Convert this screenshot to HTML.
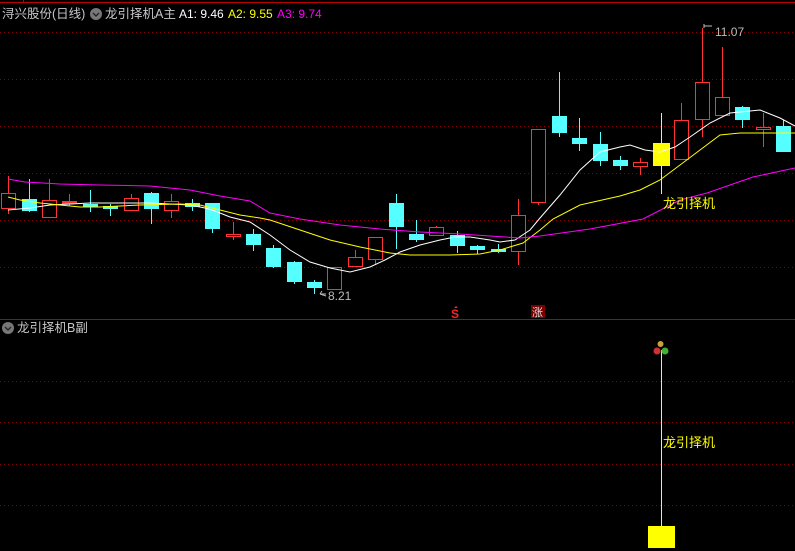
<!DOCTYPE html>
<html><head><meta charset="utf-8"><style>
html,body{margin:0;padding:0;background:#000;width:795px;height:551px;overflow:hidden}
svg{display:block}
text{font-family:"Liberation Sans","Noto Sans CJK SC",sans-serif}
</style></head><body>
<svg width="795" height="551" viewBox="0 0 795 551" xmlns="http://www.w3.org/2000/svg">
<rect width="795" height="551" fill="#000"/>
<line x1="0" y1="2.5" x2="795" y2="2.5" stroke="#b00" stroke-width="1"/>
<line x1="23.5" y1="0" x2="23.5" y2="3" stroke="#b00"/>
<g stroke="#8a0000" stroke-width="1" stroke-dasharray="1,3">
<line x1="0" y1="32.5" x2="795" y2="32.5"/><line x1="0" y1="79.5" x2="795" y2="79.5"/>
<line x1="0" y1="126.5" x2="795" y2="126.5"/><line x1="0" y1="173.5" x2="795" y2="173.5"/>
<line x1="0" y1="220.5" x2="795" y2="220.5"/><line x1="0" y1="267.5" x2="795" y2="267.5"/>
<line x1="0" y1="381.5" x2="795" y2="381.5"/><line x1="0" y1="422.5" x2="795" y2="422.5"/>
<line x1="0" y1="464.5" x2="795" y2="464.5"/><line x1="0" y1="505.5" x2="795" y2="505.5"/>
</g>
<line x1="0" y1="319.5" x2="795" y2="319.5" stroke="#b00" stroke-width="1"/>

<!-- header -->
<text x="2" y="18" font-size="12.5" fill="#c8c8c8">浔兴股份(日线)</text>
<circle cx="96" cy="14" r="6" fill="#777"/><path d="M93 13 l3 3 l3 -3" stroke="#222" fill="none" stroke-width="1.3"/>
<text x="105" y="18" font-size="12.5" fill="#c8c8c8">龙引择机A主</text>
<text x="179" y="18" font-size="12" fill="#fff">A1: 9.46</text>
<text x="228" y="18" font-size="12" fill="#ff0">A2: 9.55</text>
<text x="277" y="18" font-size="12" fill="#f0f">A3: 9.74</text>

<circle cx="8" cy="328" r="6" fill="#777"/><path d="M5 327 l3 3 l3 -3" stroke="#222" fill="none" stroke-width="1.3"/>
<text x="17" y="332" font-size="12.5" fill="#c8c8c8">龙引择机B副</text>

<!-- wicks -->
<g stroke-width="1">
<g stroke="#ff3333">
<line x1="8.5" y1="176" x2="8.5" y2="214"/><line x1="49.5" y1="179" x2="49.5" y2="218"/>
<line x1="69.5" y1="194" x2="69.5" y2="206"/><line x1="131.5" y1="194" x2="131.5" y2="211"/>
<line x1="171.5" y1="194" x2="171.5" y2="218"/><line x1="233.5" y1="222" x2="233.5" y2="240"/>
<line x1="334.5" y1="267" x2="334.5" y2="290"/><line x1="355.5" y1="250" x2="355.5" y2="267"/>
<line x1="375.5" y1="237" x2="375.5" y2="265"/><line x1="436.5" y1="226" x2="436.5" y2="236"/>
<line x1="518.5" y1="199" x2="518.5" y2="265"/><line x1="538.5" y1="129" x2="538.5" y2="205"/>
<line x1="640.5" y1="158" x2="640.5" y2="175"/><line x1="681.5" y1="103" x2="681.5" y2="160"/>
<line x1="702.5" y1="28" x2="702.5" y2="137"/><line x1="722.5" y1="47" x2="722.5" y2="117"/>
<line x1="763.5" y1="113" x2="763.5" y2="147"/>
</g>
<g stroke="#55ffff">
<line x1="29.5" y1="179" x2="29.5" y2="212"/><line x1="90.5" y1="190" x2="90.5" y2="212"/>
<line x1="110.5" y1="204" x2="110.5" y2="216"/><line x1="151.5" y1="192" x2="151.5" y2="224"/>
<line x1="192.5" y1="199" x2="192.5" y2="211"/><line x1="212.5" y1="203" x2="212.5" y2="233"/>
<line x1="253.5" y1="229" x2="253.5" y2="251"/><line x1="273.5" y1="245" x2="273.5" y2="268"/>
<line x1="294.5" y1="261" x2="294.5" y2="284"/><line x1="314.5" y1="280" x2="314.5" y2="294"/>
<line x1="396.5" y1="194" x2="396.5" y2="249"/><line x1="416.5" y1="220" x2="416.5" y2="242"/>
<line x1="457.5" y1="231" x2="457.5" y2="253"/><line x1="477.5" y1="245" x2="477.5" y2="254"/>
<line x1="498.5" y1="244" x2="498.5" y2="253"/><line x1="559.5" y1="72" x2="559.5" y2="137"/>
<line x1="579.5" y1="118" x2="579.5" y2="151"/><line x1="600.5" y1="132" x2="600.5" y2="166"/>
<line x1="620.5" y1="156" x2="620.5" y2="170"/><line x1="742.5" y1="106" x2="742.5" y2="128"/>
<line x1="783.5" y1="120" x2="783.5" y2="152"/>
</g>
<line x1="661.5" y1="113" x2="661.5" y2="194" stroke="#ff0"/>
</g>
<!-- red hollow bodies -->
<g fill="#000" stroke="#ff3333" stroke-width="1">
<rect x="1.5" y="193.5" width="14" height="15"/><rect x="42.5" y="200.5" width="14" height="17"/>
<rect x="62.5" y="201.5" width="14" height="2" fill="#ff3333"/><rect x="124.5" y="198.5" width="14" height="12"/>
<rect x="164.5" y="201.5" width="14" height="9"/><rect x="226.5" y="234.5" width="14" height="2"/>
<rect x="327.5" y="267.5" width="14" height="22"/><rect x="348.5" y="257.5" width="14" height="9"/>
<rect x="368.5" y="237.5" width="14" height="22"/><rect x="429.5" y="227.5" width="14" height="8"/>
<rect x="511.5" y="215.5" width="14" height="36"/><rect x="531.5" y="129.5" width="14" height="73"/>
<rect x="633.5" y="162.5" width="14" height="4"/><rect x="674.5" y="120.5" width="14" height="39"/>
<rect x="695.5" y="82.5" width="14" height="37"/><rect x="715.5" y="97.5" width="14" height="18"/>
<rect x="756.5" y="127.5" width="14" height="2"/>
</g>
<!-- cyan bodies -->
<g fill="#55ffff">
<rect x="22" y="199" width="15" height="12"/><rect x="83" y="204" width="15" height="3"/>
<rect x="103" y="206" width="15" height="3"/><rect x="144" y="193" width="15" height="16"/>
<rect x="185" y="203" width="15" height="4"/><rect x="205" y="203" width="15" height="26"/>
<rect x="246" y="234" width="15" height="11"/><rect x="266" y="248" width="15" height="19"/>
<rect x="287" y="262" width="15" height="20"/><rect x="307" y="282" width="15" height="6"/>
<rect x="389" y="203" width="15" height="24"/><rect x="409" y="234" width="15" height="6"/>
<rect x="450" y="235" width="15" height="11"/><rect x="470" y="246" width="15" height="4"/>
<rect x="491" y="249" width="15" height="3"/><rect x="552" y="116" width="15" height="17"/>
<rect x="572" y="138" width="15" height="6"/><rect x="593" y="144" width="15" height="17"/>
<rect x="613" y="160" width="15" height="6"/><rect x="735" y="107" width="15" height="13"/>
<rect x="776" y="126" width="15" height="26"/>
</g>
<rect x="653" y="143" width="17" height="23" fill="#ff0"/>

<!-- MA lines -->
<polyline fill="none" stroke="#fff" stroke-width="1" points="8,210 30,208 50,205 90,203 130,203 150,203 190,205 205,208 215,211 230,217 250,222 270,235 290,250 310,262 330,268 350,272 370,267 385,260 400,252 420,245 440,240 455,237 470,237 490,240 500,242 515,240 530,230 540,218 560,195 580,170 600,152 620,147 630,145 645,150 660,152 675,147 690,137 710,123 730,113 760,110 780,118 795,126"/>
<polyline fill="none" stroke="#ff0" stroke-width="1" points="8,197 20,200 40,203 60,205 80,207 100,207 140,205 180,204 200,205 220,210 240,215 260,218 270,220 300,230 330,240 360,247 390,253 410,255 450,255 480,254 500,250 523,243 540,230 553,219 580,205 620,196 640,190 660,180 680,165 700,150 720,135 740,133 795,133"/>
<polyline fill="none" stroke="#f0f" stroke-width="1" points="8,179 25,182 60,184 100,185 150,186 190,190 220,196 250,201 270,213 300,219 340,225 380,229 420,232 460,234 490,236 520,238 540,236 590,229 643,219 680,200 707,193 753,177 795,168"/>

<!-- labels -->
<path d="M326 296 l-6 -2 M320 294 l2 -3 M320 294 h6" stroke="#bbb" fill="none"/>
<text x="328" y="300" font-size="12" fill="#bbb">8.21</text>
<path d="M704 24 v4 M704 26 h8" stroke="#bbb" fill="none"/>
<text x="715" y="36" font-size="12" fill="#bbb">11.07</text>
<text x="663" y="208" font-size="13" fill="#ff0">龙引择机</text>
<text x="451" y="318" font-size="12" fill="#f22" font-weight="bold">S</text>
<path d="M456 306 l-2 2 h4 z" fill="#f22"/>
<rect x="531" y="305" width="14" height="13" fill="#7a0000"/>
<text x="532" y="316" font-size="11" fill="#ddd">涨</text>

<!-- lower panel -->
<line x1="661.5" y1="350" x2="661.5" y2="527" stroke="#ff0"/>
<circle cx="660.5" cy="344" r="3" fill="#c9a040"/>
<circle cx="657" cy="351" r="3.5" fill="#d03030"/>
<circle cx="665" cy="351" r="3.5" fill="#40b030"/>
<text x="663" y="447" font-size="13" fill="#ff0">龙引择机</text>
<rect x="648" y="526" width="27" height="22" fill="#ff0"/>
</svg>
</body></html>
